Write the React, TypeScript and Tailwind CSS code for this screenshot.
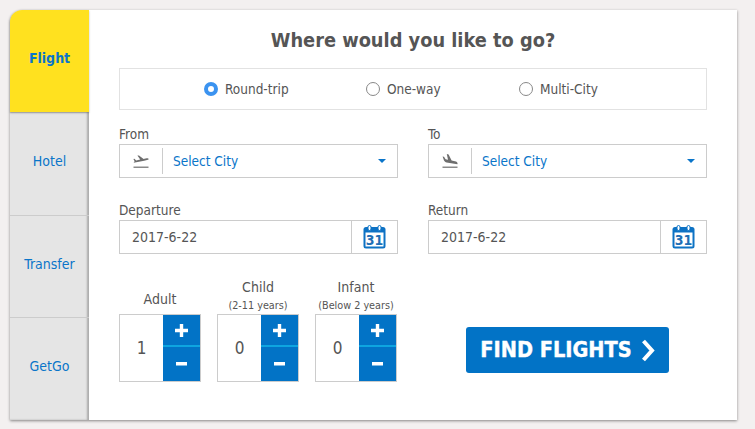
const font = "font-['DejaVu_Sans',sans-serif] font-stretch-condensed";

const tabs = [
  { label: "Hotel", height: "h-[103px]", pad: "pb-[4px]" },
  { label: "Transfer", height: "h-[102px]", pad: "pb-[4px]" },
  { label: "GetGo", height: "h-[103px]", pad: "pb-[6px]" },
];

const trips = [
  { label: "Round-trip", active: true, width: "w-[162px]" },
  { label: "One-way", active: false, width: "w-[153px]" },
  { label: "Multi-City", active: false, width: "w-[90px]" },
];

const counters = [
  { label: "Adult", hint: "", value: 1 },
  { label: "Child", hint: "(2-11 years)", value: 0 },
  { label: "Infant", hint: "(Below 2 years)", value: 0 },
];

function PlaneIcon({ landing }: { landing?: boolean }) {
  return (
    <svg width="16" height="14" viewBox="0 0 16 14" className="text-[#6e6e6e]" fill="currentColor">
      {landing ? (
        <>
          <path d="M15.4 10.2 L4.6 8.6 C3.6 8.4 2.4 7.4 2 6.6 L0.6 2.4 L2 2.8 L3.6 5.2 L6 5.8 L4.8 0 L6.6 0.4 L9.6 6.6 L14 7.4 C15.2 7.6 16 9.6 15.4 10.2 Z" />
          <rect x="0.5" y="12.6" width="15" height="1.2" />
        </>
      ) : (
        <>
          <path d="M0.6 8.8 L11.2 6.8 L15 5.8 C16 5.4 15.8 4.2 14.6 4.2 C13.6 4.2 11.4 4.8 10.6 5 L6 1.4 L4.4 1.6 L7.2 5.6 L3.2 6.4 L1.4 4.8 L0.4 5 L1.6 7.2 Z" />
          <rect x="0.5" y="12.6" width="15" height="1.2" />
        </>
      )}
    </svg>
  );
}

function CalendarIcon() {
  return (
    <svg width="23" height="24" viewBox="0 0 23 24">
      <rect x="0.5" y="2" width="22" height="21.5" rx="2.5" fill="#0d72c4" />
      <rect x="2.5" y="7.5" width="18" height="14" fill="#fff" />
      <rect x="5" y="0.5" width="3" height="5" rx="1.5" fill="#fff" stroke="#0d72c4" strokeWidth="1" />
      <rect x="15" y="0.5" width="3" height="5" rx="1.5" fill="#fff" stroke="#0d72c4" strokeWidth="1" />
      <text x="11.5" y="20.3" textAnchor="middle" fontSize="14" fontWeight="700" fill="#1f6fb5" fontFamily="DejaVu Sans, sans-serif">
        31
      </text>
    </svg>
  );
}

function CitySelect({ label, landing }: { label: string; landing?: boolean }) {
  return (
    <div>
      <div className="h-[24px] pt-[4px] text-[13.5px] leading-[20px] text-[#555]">{label}</div>
      <div className="flex h-[34px] items-center border border-[#ccc] bg-white">
        <div className="flex w-[42px] items-center justify-center">
          <PlaneIcon landing={landing} />
        </div>
        <div className="h-[26px] w-px bg-[#ccc]" />
        <div className="flex-1 pl-[10px] pt-px text-[13.5px] text-[#0a75c9]">Select City</div>
        <div className="mr-[11px] h-0 w-0 border-x-[4px] border-t-[4px] border-x-transparent border-t-[#0a75c9]" />
      </div>
    </div>
  );
}

function DateField({ label }: { label: string }) {
  return (
    <div>
      <div className="h-[24px] pt-[4px] text-[13.5px] leading-[20px] text-[#555]">{label}</div>
      <div className="flex h-[34px] items-center border border-[#ccc] bg-white">
        <div className="flex-1 pl-[12px] text-[14px] text-[#555]">2017-6-22</div>
        <div className="flex h-full w-[46px] items-center justify-center border-l border-[#ccc]">
          <CalendarIcon />
        </div>
      </div>
    </div>
  );
}

function Counter({ label, hint, value }: { label: string; hint: string; value: number }) {
  return (
    <div className="flex w-[82px] flex-col items-center">
      <div className={`text-center text-[14px] leading-[18px] text-[#555] ${hint ? "pb-[2px]" : "pb-[6px]"}`}>{label}</div>
      {hint && <div className="h-[16px] whitespace-nowrap text-center text-[10.75px] leading-[16px] text-[#555]">{hint}</div>}
      <div className="flex h-[68px] w-full border border-[#ccc] bg-white">
        <div className="flex flex-1 items-center justify-center pt-px text-[17px] text-[#555]">{value}</div>
        <div className="flex w-[37px] flex-col bg-[#0273c6]">
          <div className="flex h-[32px] items-center justify-center border-b-2 border-[#0ea5e0]">
            <svg width="13" height="13" viewBox="0 0 13 13" stroke="#fff" strokeWidth="3.4">
              <path d="M6.5 0V13M0 6.5H13" />
            </svg>
          </div>
          <div className="flex flex-1 items-center justify-center">
            <svg width="11" height="4" viewBox="0 0 11 4" fill="#fff">
              <rect width="11" height="3.5" />
            </svg>
          </div>
        </div>
      </div>
    </div>
  );
}

export default function App() {
  return (
    <div className={`h-[429px] w-[755px] overflow-hidden bg-[#f3f0f0] pl-[10px] pt-[10px] ${font}`}>
      <div className="flex h-[410px] w-[727px] rounded-tl-[12px] bg-white shadow-[0_1px_3px_rgba(0,0,0,0.45)]">
        <aside className="relative flex w-[79px] flex-col">
          <div className="relative z-10 flex h-[102px] items-center justify-center rounded-tl-[12px] bg-[#ffe11f] pb-[6px] text-[14px] font-bold text-[#0a75c9] shadow-[0_1px_2px_rgba(0,0,0,0.3)]">
            Flight
          </div>
          <div className="flex flex-1 flex-col bg-[#e5e5e5] shadow-[inset_-2px_0_2px_rgba(0,0,0,0.25)]">
            {tabs.map((tab, i) => (
              <div
                key={tab.label}
                className={`flex ${tab.height} ${tab.pad} items-center justify-center text-[14px] text-[#0a75c9] ${i > 0 ? "border-t border-[#ccc]" : ""}`}
              >
                {tab.label}
              </div>
            ))}
          </div>
        </aside>

        <main className="flex-1 px-[30px]">
          <h1 className="h-[58px] pt-[16px] text-center text-[19.8px] leading-[30px] font-bold text-[#555]">
            Where would you like to go?
          </h1>
          <div className="flex h-[42px] items-center border border-[#e2e2e2] pl-[84px]">
            {trips.map((trip) => (
              <div key={trip.label} className={`flex ${trip.width} items-center gap-[7px] text-[13.5px] text-[#555]`}>
                {trip.active ? (
                  <span className="h-[14px] w-[14px] rounded-full border-[4px] border-[#3b93f0] bg-white" />
                ) : (
                  <span className="h-[14px] w-[14px] rounded-full border border-[#888] bg-white" />
                )}
                {trip.label}
              </div>
            ))}
          </div>

          <div className="mt-[10px] grid grid-cols-2 gap-x-[30px] gap-y-[18px]">
            <CitySelect label="From" />
            <CitySelect label="To" landing />
            <DateField label="Departure" />
            <DateField label="Return" />
          </div>

          <div className="mt-[24px] flex items-end">
            <div className="flex items-end gap-[16px]">
              {counters.map((c) => (
                <Counter key={c.label} {...c} />
              ))}
            </div>
            <button className="mb-[9px] ml-[69px] flex h-[46px] w-[203px] items-center justify-center gap-[9px] rounded-[3px] bg-[#0273c6] pt-px text-[21.5px] font-bold text-white [-webkit-text-stroke:0.4px_white]">
              FIND FLIGHTS
              <svg width="14" height="23" viewBox="0 0 14 23" fill="none" stroke="currentColor" strokeWidth="4">
                <path d="M2.5 2 L11 11.5 L2.5 21" />
              </svg>
            </button>
          </div>
        </main>
      </div>
    </div>
  );
}
